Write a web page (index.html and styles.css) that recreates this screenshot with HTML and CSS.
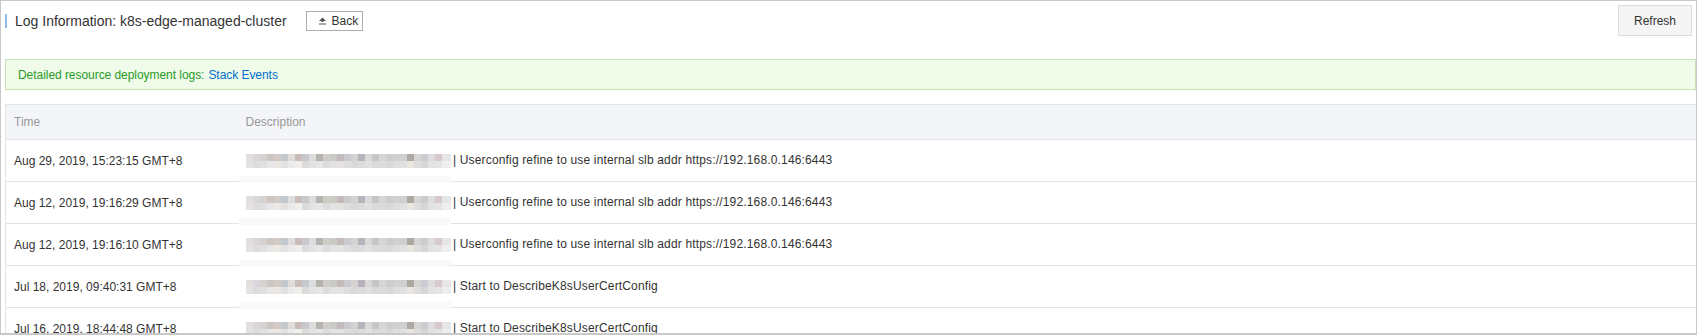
FILE: index.html
```html
<!DOCTYPE html>
<html lang="en">
<head>
<meta charset="utf-8">
<title>Log Information</title>
<link rel="stylesheet" href="styles.css">
</head>
<body>
<div class="frame">
  <div class="topbar">
    <div class="title-group">
      <span class="title-bar"></span>
      <h1 class="title">Log Information: k8s-edge-managed-cluster</h1>
      <button class="btn-back" type="button">
        <svg class="back-icon" width="9" height="8" viewBox="0 0 9 8" aria-hidden="true">
          <path d="M4.5 0.5 L8 4 L5.5 4 L5.5 5 L3.5 5 L3.5 4 L1 4 Z" fill="#555"/>
          <rect x="1" y="6.5" width="7" height="1" fill="#555"/>
        </svg>
        <span>Back</span>
      </button>
    </div>
    <button class="btn-refresh" type="button">Refresh</button>
  </div>

  <div class="alert">
    <span class="alert-text">Detailed resource deployment logs:</span>
    <a class="alert-link" href="#">Stack Events</a>
  </div>

  <table class="log-table">
    <thead>
      <tr><th class="col-time">Time</th><th>Description</th></tr>
    </thead>
    <tbody>
      <tr><td>Aug 29, 2019, 15:23:15 GMT+8</td><td class="desc"><span class="mosaic"></span> | Userconfig refine to use internal slb addr https://192.168.0.146:6443</td></tr>
      <tr><td>Aug 12, 2019, 19:16:29 GMT+8</td><td class="desc"><span class="mosaic"></span> | Userconfig refine to use internal slb addr https://192.168.0.146:6443</td></tr>
      <tr><td>Aug 12, 2019, 19:16:10 GMT+8</td><td class="desc"><span class="mosaic"></span> | Userconfig refine to use internal slb addr https://192.168.0.146:6443</td></tr>
      <tr><td>Jul 18, 2019, 09:40:31 GMT+8</td><td class="desc"><span class="mosaic"></span> | Start to DescribeK8sUserCertConfig</td></tr>
      <tr><td>Jul 16, 2019, 18:44:48 GMT+8</td><td class="desc"><span class="mosaic"></span> | Start to DescribeK8sUserCertConfig</td></tr>
    </tbody>
  </table>
</div>
</body>
</html>
```

FILE: styles.css
```css
* { box-sizing: border-box; }

html, body {
  margin: 0;
  padding: 0;
  background: #fff;
}

body {
  font-family: "Liberation Sans", Arial, sans-serif;
  font-size: 12px;
  color: #333;
}

.frame {
  width: 1697px;
  height: 335px;
  border: 1px solid #c9c9c9;
  border-bottom-width: 2px;
  padding-left: 4px;
  overflow: hidden;
}

.topbar {
  display: flex;
  align-items: center;
  justify-content: space-between;
  padding-top: 4px;
  padding-right: 4px;
  height: 35px;
}

.title-group {
  display: flex;
  align-items: center;
}

.title-bar {
  width: 2px;
  height: 14px;
  background: #8dbbe5;
  margin-right: 8px;
}

.title {
  margin: 0;
  font-size: 14px;
  font-weight: normal;
  color: #333;
  line-height: 20px;
}

.btn-back {
  display: flex;
  align-items: center;
  gap: 5px;
  margin-left: 19px;
  width: 57px;
  height: 20px;
  padding: 0 0 0 11px;
  border: 1px solid #adadad;
  background: #fff;
  font-family: inherit;
  font-size: 12px;
  color: #333;
}

.back-icon { display: block; }

.btn-refresh {
  width: 74px;
  height: 31px;
  border: 1px solid #dcdcdc;
  background: #f5f5f5;
  font-family: inherit;
  font-size: 12px;
  color: #333;
  padding: 0;
}

.alert {
  margin-top: 23px;
  height: 31px;
  border: 1px solid #c8e2b6;
  background: #f1fbe9;
  padding: 0 12px;
  display: flex;
  align-items: center;
  gap: 4px;
  letter-spacing: -0.05px;
}

.alert-text { color: #2a9a2a; }

.alert-link {
  color: #0070cc;
  text-decoration: none;
}

.log-table {
  margin-top: 14px;
  width: calc(100% + 1px);
  border-collapse: collapse;
  border-left: 1px solid #e5e5e5;
  table-layout: fixed;
}

.log-table th {
  height: 35px;
  background: #f4f5f9;
  border-top: 1px solid #e3e5ea;
  border-bottom: 1px solid #e3e5ea;
  text-align: left;
  font-weight: normal;
  color: #999;
  padding: 0 8px;
}

.log-table th.col-time { width: 232px; }

.log-table td {
  height: 42px;
  border-bottom: 1px solid #e3e3e3;
  padding: 0 8px;
  color: #333;
  white-space: nowrap;
}

.log-table td.desc {
  position: relative;
  letter-spacing: 0.16px;
}

.log-table td.desc::after {
  content: "";
  position: absolute;
  left: 1px;
  top: 36px;
  width: 212px;
  height: 7px;
  background: #f8f9fb;
}

.mosaic {
  display: inline-block;
  width: 205px;
  height: 14px;
  vertical-align: middle;
  margin-right: -1px;
  background-image:
    linear-gradient(to right, #e2dedb 0 7px, #d9d7da 7px 14px, #d6d2cf 14px 21px, #cdc6c2 21px 28px, #d2cbc6 28px 35px, #c2c9ce 35px 42px, #dedddc 42px 49px, #c9bcb9 49px 56px, #c6c9cd 56px 63px, #dcdcdc 63px 70px, #b7b3ae 70px 77px, #cfcdc8 77px 84px, #cbc9c4 84px 91px, #c3bbbb 91px 98px, #cacacf 98px 105px, #d5d2d3 105px 112px, #b8b2bc 112px 119px, #d9d9d9 119px 126px, #c6c6c6 126px 133px, #d6d6d6 133px 140px, #cdcdcd 140px 147px, #d1d1d1 147px 154px, #cfcfcf 154px 161px, #ada9a2 161px 168px, #d5d5d5 168px 175px, #c9cdd2 175px 182px, #dddddd 182px 189px, #d8c9d0 189px 196px, #e6e6e6 196px 205px),
    linear-gradient(to right, #e5e3e1 0 7px, #dcdcdd 7px 14px, #e2e0df 14px 21px, #e7e7e9 21px 28px, #ebe7e3 28px 35px, #e2e2e2 35px 42px, #eaeaea 42px 49px, #f1efeb 49px 56px, #dcdcdc 56px 63px, #e2e2e5 63px 70px, #e6e6e6 70px 77px, #dcdcdc 77px 84px, #e3e3e3 84px 91px, #e5e3e1 91px 98px, #dedede 98px 105px, #d9d9d9 105px 112px, #dcdcdc 112px 119px, #e1e1e1 119px 126px, #dadada 126px 133px, #dbdbdb 133px 140px, #d8d8d8 140px 147px, #dedede 147px 154px, #e0e0e0 154px 161px, #e9e6e0 161px 168px, #dddddd 168px 175px, #d6d6d6 175px 182px, #e2e2e2 182px 189px, #e4e4e4 189px 196px, #eeeeee 196px 205px);
  background-size: 100% 7px, 100% 7px;
  background-position: 0 0, 0 7px;
  background-repeat: no-repeat;
}
```
